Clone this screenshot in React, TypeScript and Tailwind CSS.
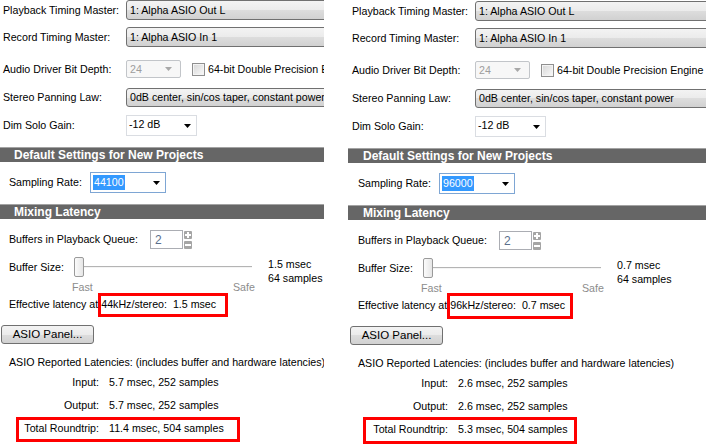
import React from "react";

type PanelData = {
  rate: string;
  latencyMs: string;
  effective: string;
  io: string;
  total: string;
  effBox: string;
  totalBox: string;
};

const panels: PanelData[] = [
  {
    rate: "44100",
    latencyMs: "1.5 msec",
    effective: "44kHz/stereo:  1.5 msec",
    io: "5.7 msec, 252 samples",
    total: "11.4 msec, 504 samples",
    effBox: "left-[99px] top-[-3px] h-[24px] w-[130px]",
    totalBox: "left-[17px] top-[-4px] h-[25px] w-[224px]",
  },
  {
    rate: "96000",
    latencyMs: "0.7 msec",
    effective: "96kHz/stereo:  0.7 msec",
    io: "2.6 msec, 252 samples",
    total: "5.3 msec, 504 samples",
    effBox: "left-[99px] top-[-4px] h-[26px] w-[126px]",
    totalBox: "left-[15px] top-[-5px] h-[27px] w-[214px]",
  },
];

function Arrow({ color = "#000" }: { color?: string }) {
  return (
    <svg width="7" height="4" viewBox="0 0 7 4">
      <path d="M0 0h7L3.5 4z" fill={color} />
    </svg>
  );
}

// win7 style gray combobox, cut off by the panel edge
function GrayCombo({ text }: { text: string }) {
  return (
    <div className="flex h-full w-[260px] shrink-0 items-center rounded-[3px] border border-[#707070] bg-[linear-gradient(#f3f3f3_0%,#ebebeb_50%,#dddddd_50%,#d1d1d1_100%)] pl-[3px]">
      {text}
    </div>
  );
}

function TopRow({
  label,
  className,
  children,
}: {
  label: string;
  className: string;
  children: React.ReactNode;
}) {
  return (
    <div className={`flex items-center ${className}`}>
      <span className="w-[127px] shrink-0 pl-[4px]">{label}</span>
      {children}
    </div>
  );
}

function Header({ title, className }: { title: string; className: string }) {
  return (
    <div
      className={`flex h-[15px] w-full items-center border-t border-[#a3a3a3] bg-[#666666] pl-[15px] text-[12px] font-bold text-white ${className}`}
    >
      {title}
    </div>
  );
}

function Panel({ d }: { d: PanelData }) {
  return (
    <div className="flex w-[400px] flex-col text-[10.67px] leading-none text-black">
      <TopRow label="Playback Timing Master:" className="h-[20px]">
        <GrayCombo text="1: Alpha ASIO Out L" />
      </TopRow>
      <TopRow label="Record Timing Master:" className="mt-[7px] h-[20px]">
        <GrayCombo text="1: Alpha ASIO In 1" />
      </TopRow>
      <TopRow label="Audio Driver Bit Depth:" className="mt-[13px] h-[18px]">
        <div className="flex h-full w-[55px] shrink-0 items-center justify-between rounded-[2px] border border-[#c2c5c9] bg-[#f7f7f7] pr-[8px] pl-[3px] text-[#9d9d9d]">
          <span>24</span>
          <Arrow color="#a8a8a8" />
        </div>
        <div className="ml-[11px] h-[13px] w-[13px] shrink-0 border border-[#8f8f8f] bg-[linear-gradient(135deg,#d6d6d6,#fafafa)] shadow-[inset_0_0_0_1px_#f4f4f4]" />
        <span className="ml-[3px] whitespace-nowrap">64-bit Double Precision Engine</span>
      </TopRow>
      <TopRow label="Stereo Panning Law:" className="mt-[10px] h-[19px]">
        <GrayCombo text="0dB center, sin/cos taper, constant power" />
      </TopRow>
      <TopRow label="Dim Solo Gain:" className="mt-[8px] h-[21px]">
        <div className="flex h-full w-[71px] shrink-0 items-center justify-between border border-[#dadde2] bg-white pr-[5px] pl-[2px]">
          <span className="-mt-[3px]">-12 dB</span>
          <Arrow />
        </div>
      </TopRow>

      <Header title="Default Settings for New Projects" className="mt-[11px]" />

      <div className="mt-[10px] flex h-[21px] items-center">
        <span className="w-[91px] shrink-0 pl-[10px]">Sampling Rate:</span>
        <div className="flex h-full w-[76px] shrink-0 items-center justify-between border border-[#7ea6d4] bg-white pr-[5px] pl-[2px]">
          <span className="bg-[#3399ff] px-px py-[2px] text-white">{d.rate}</span>
          <Arrow />
        </div>
      </div>

      <Header title="Mixing Latency" className="mt-[11px]" />

      <div className="mt-[11px] flex h-[19px] items-center">
        <span className="w-[151px] shrink-0 pl-[10px]">Buffers in Playback Queue:</span>
        <div className="flex h-full w-[33px] shrink-0 items-center border border-[#abadb3] bg-white pl-[4px] text-[12px] text-[#5a6f8c]">
          2
        </div>
        <div className="ml-px flex flex-col gap-[2px]">
          <div className="flex h-[8px] w-[8px] items-center justify-center rounded-[1px] bg-[#a5a5a5]">
            <svg width="6" height="6" viewBox="0 0 6 6">
              <path d="M0 3h6M3 0v6" stroke="#fff" strokeWidth="2" />
            </svg>
          </div>
          <div className="flex h-[8px] w-[8px] items-center justify-center rounded-[1px] bg-[#a5a5a5]">
            <svg width="6" height="6" viewBox="0 0 6 6">
              <path d="M0 3h6" stroke="#fff" strokeWidth="2" />
            </svg>
          </div>
        </div>
      </div>

      <div className="mt-[8px] flex h-[20px] items-center">
        <span className="w-[75px] shrink-0 pl-[10px]">Buffer Size:</span>
        <div className="flex h-full w-[178px] shrink-0 items-center">
          <div className="h-full w-[10px] shrink-0 rounded-[2px] border border-[#9a9a9a] bg-[linear-gradient(90deg,#fbfbfb,#e6e6e6)]" />
          <div className="h-[2px] flex-1 border-t border-[#b4b4b4] bg-[#f4f4f4]" />
        </div>
        <div className="ml-[16px] flex flex-col gap-[3px] self-start pt-[2px]">
          <span>{d.latencyMs}</span>
          <span>64 samples</span>
        </div>
      </div>

      <div className="mt-[4px] flex h-[13px] items-center text-[#8c8c8c]">
        <span className="w-[234px] shrink-0 pl-[73px]">Fast</span>
        <span>Safe</span>
      </div>

      <div className="relative mt-[2px] flex h-[16px] items-center whitespace-pre pl-[10px]">
        <span>Effective latency at {d.effective}</span>
        <div className={`absolute border-[3px] border-[#ff0000] ${d.effBox}`} />
      </div>

      <div className="mt-[13px] ml-[2px] flex h-[19px] w-[93px] items-center justify-center rounded-[3px] border border-[#707070] bg-[linear-gradient(#f3f3f3_0%,#ebebeb_50%,#dddddd_50%,#d1d1d1_100%)] text-[11.5px]">
        ASIO Panel...
      </div>

      <div className="mt-[11px] flex h-[14px] items-center pl-[10px]">
        ASIO Reported Latencies: (includes buffer and hardware latencies)
      </div>

      {[
        ["Input:", d.io, "mt-[6px]", ""],
        ["Output:", d.io, "mt-[9px]", ""],
        ["Total Roundtrip:", d.total, "mt-[9px]", d.totalBox],
      ].map(([label, value, mt, box]) => (
        <div key={label} className={`relative flex h-[14px] items-center ${mt}`}>
          <span className="w-[100px] shrink-0 text-right">{label}</span>
          <span className="ml-[10px]">{value}</span>
          {box && <div className={`absolute border-[3px] border-[#ff0000] ${box}`} />}
        </div>
      ))}
    </div>
  );
}

export default function App() {
  return (
    <div className="flex h-[444px] w-[725px] overflow-hidden bg-white font-['Liberation_Sans',Arial,sans-serif]">
      <div className="-ml-px w-[325px] shrink-0 overflow-hidden">
        <Panel d={panels[0]} />
      </div>
      <div className="ml-[24px] w-[358px] shrink-0 overflow-hidden pt-px">
        <Panel d={panels[1]} />
      </div>
    </div>
  );
}
